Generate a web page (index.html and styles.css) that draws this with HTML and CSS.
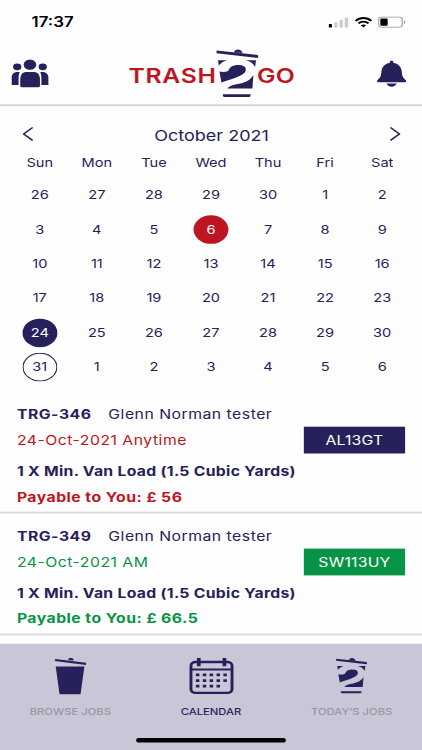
FILE: index.html
```html
<!DOCTYPE html>
<html lang="en">
<head>
    <meta charset="UTF-8">
    <meta name="viewport" content="width=device-width, initial-scale=1.0">
    <title>Trash 2 Go - Calendar</title>
    <link rel="stylesheet" href="styles.css">
</head>
<body>
    <div class="screen">
        <div class="status-bar">
            <span class="time">17:37</span>
            <div class="status-icons">
                <svg width="18" height="12" viewBox="0 0 18 12">
                    <rect x="0" y="8" width="3" height="4" rx=".7" fill="#000"/>
                    <rect x="5" y="6" width="3" height="6" rx=".7" fill="#ccc"/>
                    <rect x="9.7" y="3.5" width="3" height="8.5" rx=".7" fill="#ccc"/>
                    <rect x="14.4" y="1" width="3" height="11" rx=".7" fill="#ccc"/>
                </svg>
                <svg width="16" height="12" viewBox="0 0 16 12" fill="none" stroke="#000" stroke-width="2">
                    <path d="M1 4.6C5 .5 11 .5 15 4.6M3.5 7.3c2.6-2.6 6.4-2.6 9 0" fill="none"/>
                    <path d="M8 11.7L5.6 9.3c1.4-1.2 3.4-1.2 4.8 0z" fill="#000" stroke="none"/>
                </svg>
                <svg width="25" height="12" viewBox="0 0 25 12">
                    <rect x=".5" y=".5" width="21" height="11" rx="3" fill="none" stroke="#999"/>
                    <rect x="2" y="2" width="6.5" height="8" rx="1.2"/>
                    <path d="M23 4v4c1.6-.6 1.6-3.4 0-4z" fill="#999"/>
                </svg>
            </div>
        </div>

        <header class="header">
            <svg class="people" width="34" height="32" viewBox="0 0 34 32">
                <circle cx="5.3" cy="8.4" r="3.7"/>
                <circle cx="28" cy="8.4" r="3.7"/>
                <circle cx="16.6" cy="6" r="5.6"/>
                <path d="M7.500 14H5.500C2 14 .3 17 .3 20v8H6.500v-6c0-3.500 .3-5.500 1-8zM25.800 14h2c3.500 0 5.200 3 5.200 6v8h-6.200v-6c0-3.500-.3-5.500-1-8z"/>
                <path d="M13 14h7.500c3.500 0 5 4 5 8v7q0 1.500-1.500 1.500H9.500Q8 30.500 8 29v-7c0-4 1.500-8 5-8z"/>
            </svg>
            <div class="logo">
                <span>TRASH</span>
                <svg width="38" height="54" viewBox="0 0 38 54"><use href="#bin2"/></svg>
                <span class="go">GO</span>
            </div>
            <svg class="bell" width="26" height="31" viewBox="0 0 26 31">
                <path d="M11.500 3V1.500q1.500-2 3 0V3C19 4 21.500 7.500 22 12c.4 5 .6 7 3.500 9.500.9 1 .3 2.500-1 2.500h-23c-1.300 0-1.900-1.500-1-2.500C3.400 19 3.600 17 4 12c.5-4.500 3-8 7.500-9z"/>
                <path d="M8.500 25.500h9C16.500 30 9.500 30 8.500 25.500z"/>
            </svg>
        </header>

        <section class="calendar">
            <div class="month">
                <svg width="10" height="16" viewBox="0 0 10 16"><path d="M9 1L1 8l8 7"/></svg>
                <span>October 2021</span>
                <svg width="10" height="16" viewBox="0 0 10 16"><path d="M1 1l8 7-8 7"/></svg>
            </div>
            <div class="weekdays">
                <span>Sun</span><span>Mon</span><span>Tue</span><span>Wed</span><span>Thu</span><span>Fri</span><span>Sat</span>
            </div>
            <div class="days">
                <span>26</span><span>27</span><span>28</span><span>29</span><span>30</span><span>1</span><span>2</span>
                <span>3</span><span>4</span><span>5</span><span class="today">6</span><span>7</span><span>8</span><span>9</span>
                <span>10</span><span>11</span><span>12</span><span>13</span><span>14</span><span>15</span><span>16</span>
                <span>17</span><span>18</span><span>19</span><span>20</span><span>21</span><span>22</span><span>23</span>
                <span class="selected">24</span><span>25</span><span>26</span><span>27</span><span>28</span><span>29</span><span>30</span>
                <span class="outlined">31</span><span>1</span><span>2</span><span>3</span><span>4</span><span>5</span><span>6</span>
            </div>
        </section>

        <section class="jobs">
            <article class="job red">
                <div class="job-title"><b>TRG-346</b><span>Glenn Norman tester</span></div>
                <div class="job-date"><span>24-Oct-2021 Anytime</span><span class="postcode">AL13GT</span></div>
                <div class="job-load">1 X Min. Van Load (1.5 Cubic Yards)</div>
                <div class="job-pay">Payable to You: £ 56</div>
            </article>
            <article class="job green">
                <div class="job-title"><b>TRG-349</b><span>Glenn Norman tester</span></div>
                <div class="job-date"><span>24-Oct-2021 AM</span><span class="postcode">SW113UY</span></div>
                <div class="job-load">1 X Min. Van Load (1.5 Cubic Yards)</div>
                <div class="job-pay">Payable to You: £ 66.5</div>
            </article>
        </section>

        <nav class="tabs">
            <div class="tab">
                <svg width="29" height="40" viewBox="0 0 29 40">
                    <path d="M1.200 1.500L28.500 5.500v2.500L.5 3.800zM12.500 2.500c.5-3.500 5-3 5 .7zM1.500 9.500h25.500L23.700 39q-.2 1-1.200 1H6q-1 0-1.200-1z"/>
                </svg>
                <span>BROWSE JOBS</span>
            </div>
            <div class="tab active">
                <svg width="40" height="40" viewBox="0 0 40 40">
                    <rect x="1.700" y="4.700" width="36.500" height="33.500" rx="4" fill="none" stroke="#27215b" stroke-width="2.600"/>
                    <path d="M1 11.700h38v2.300H1zM7 .3h3.300v9H7zM29.800 .3h3.300v9h-3.300z"/>
                    <path d="M6.100 18.800h28M6.100 25h28M6.100 31h22" stroke="#27215b" stroke-width="3" stroke-dasharray="3.100 3"/>
                </svg>
                <span>CALENDAR</span>
            </div>
            <div class="tab">
                <svg width="31" height="40" viewBox="0 0 38 54"><use href="#bin2" width="38" height="54"/></svg>
                <span>TODAY’S JOBS</span>
            </div>
        </nav>
        <div class="home-bar"></div>
    </div>

    <svg class="defs">
        <symbol id="bin2" viewBox="0 0 38 54">
            <path d="M.5 1.800l36.500 4.700q1 1.500 0 3.200L.3 4.700zM16 3.500c.5-4 7-4 7.500 1z"/>
            <path d="M1.800 12.300h7.500q-4 1.500-7 5.500zM26.500 12.300h9l-.8 7.200q-2.700-5.700-8.200-7.200z"/>
            <path d="M3 24.500q5 1 8-1c1-4 4-6.200 8.500-6.200 4.500 0 7 1.700 7 5 0 6-9 9-21.700 14z"/>
            <path d="M10 42.800c3-3.500 6-4 10.500-5 6-1.500 10-4 12.700-9.500l-.9 14.500z"/>
            <path d="M6 49h24.700q.3 3-1 3H7q-1.300 0-1-3z"/>
        </symbol>
    </svg>
</body>
</html>
```

FILE: styles.css
```css
body {
    margin: 0;
    width: 422px;
    height: 750px;
    overflow: hidden;
    background-color: #fefefe;
    font-family: Inter, sans-serif;
    color: #27215b;
}

/* 375x812 phone layout stretched to the window */
.screen {
    width: 375px;
    height: 812px;
    margin-bottom: -62px;
    transform: scale(1.1253, 0.9236);
    transform-origin: 0 0;
    display: flex;
    flex-direction: column;
}

svg {
    fill: #27215b;
    flex-shrink: 0;
}

.defs {
    display: none;
}

.status-bar {
    height: 47px;
    box-sizing: border-box;
    padding: 0 14px 0 28px;
    display: flex;
    justify-content: space-between;
    align-items: center;
}

.time {
    color: #000;
    font-size: 15px;
    font-weight: 600;
}

.status-icons {
    display: flex;
    gap: 5px;
}

.status-icons svg {
    fill: #000;
}

.header {
    height: 68px;
    box-sizing: border-box;
    border-bottom: 2px solid #d4d4d8;
    padding: 0 14px 0 10px;
    display: flex;
    justify-content: space-between;
    align-items: center;
}

.logo {
    display: flex;
    align-items: center;
    margin-right: 3px;
    color: #bd1622;
    font-size: 22px;
    font-weight: 600;
    letter-spacing: 0.6px;
}

.logo span {
    padding-top: 3px;
}

.logo .go {
    margin-left: -2px;
    letter-spacing: 0;
}

.calendar {
    height: 309px;
    padding: 0 10px;
}

.month {
    display: flex;
    justify-content: space-between;
    align-items: center;
    height: 28px;
    padding: 16px 9px 0 10px;
    font-size: 16px;
}

.month svg {
    fill: none;
    stroke: #27215b;
    stroke-width: 1.5;
}

.month span {
    padding-top: 3px;
}

.weekdays,
.days {
    display: grid;
    grid-template-columns: repeat(7, 1fr);
    justify-items: center;
    align-items: center;
}

.weekdays {
    height: 33px;
    padding-top: 1px;
    box-sizing: border-box;
    font-size: 13px;
}

.days {
    grid-auto-rows: 37.4px;
    font-size: 13px;
}

.days span {
    width: 31px;
    height: 31px;
    line-height: 31px;
    border-radius: 50%;
    text-align: center;
}

.days .today {
    background-color: #bd1622;
    color: #fff;
}

.days .selected {
    background-color: #27215b;
    color: #fff;
}

.days .outlined {
    box-shadow: inset 0 0 0 1px #27215b;
}

.job {
    height: 132px;
    box-sizing: border-box;
    border-bottom: 2px solid #d9d9e3;
    padding: 10px 15px 0;
    font-size: 14px;
    letter-spacing: 0.45px;
    white-space: nowrap;
}

.job-title,
.job-date,
.job-load,
.job-pay {
    display: flex;
    align-items: center;
    height: 28px;
}

.job-title {
    gap: 15px;
}

.job-date {
    justify-content: space-between;
    margin-bottom: 5px;
}

.job-load,
.job-pay {
    font-weight: 700;
    letter-spacing: 0.27px;
}

.job-pay {
    letter-spacing: 0.42px;
}

.red .job-date,
.red .job-pay {
    color: #bd1622;
}

.green .job-date,
.green .job-pay {
    color: #079447;
}

.postcode {
    width: 90px;
    height: 29px;
    line-height: 29px;
    letter-spacing: 0.2px;
    text-align: center;
    color: #fff;
    background-color: #27215b;
}

.green .postcode {
    background-color: #079447;
}

.tabs {
    height: 115px;
    box-sizing: border-box;
    margin-top: auto;
    padding-top: 15px;
    display: flex;
    background-color: #c9c7d7;
}

.tab {
    flex: 1;
    display: flex;
    flex-direction: column;
    align-items: center;
    gap: 12px;
    color: #98969f;
    font-size: 10px;
    font-weight: 500;
}

.tab.active {
    color: #27215b;
}

/* home indicator over the tab bar */
.home-bar {
    position: absolute;
    left: 121px;
    bottom: 8px;
    width: 133px;
    height: 5px;
    border-radius: 3px;
    background-color: #000;
}
```
